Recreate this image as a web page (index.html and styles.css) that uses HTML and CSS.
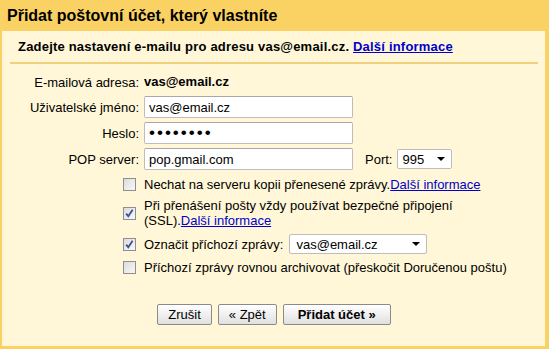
FILE: index.html
```html
<!DOCTYPE html>
<html lang="cs">
<head>
<meta charset="utf-8">
<title>Přidat poštovní účet</title>
<link rel="stylesheet" href="styles.css">
</head>
<body>
<div class="dialog">
  <h1 class="title">Přidat poštovní účet, který vlastníte</h1>
  <div class="panel">
    <p class="intro">Zadejte nastavení e-mailu pro adresu vas@email.cz. <a href="#" class="link">Další informace</a></p>
    <div class="sep"></div>
    <div class="form">
      <span class="label">E-mailová adresa:</span>
      <span class="value">vas@email.cz</span>
      <span class="label">Uživatelské jméno:</span>
      <div class="field"><input class="input" type="text" value="vas@email.cz"></div>
      <span class="label">Heslo:</span>
      <div class="field"><input class="input pass" type="password" value="xxxxxxxx"></div>
      <span class="label">POP server:</span>
      <div class="field">
        <input class="input" type="text" value="pop.gmail.com">
        <span class="port-label">Port:</span>
        <div class="select port"><span class="sel-text">995</span><span class="arrow"></span></div>
      </div>
    </div>
    <div class="options">
      <div class="opt">
        <span class="cb"></span>
        <span class="opt-text">Nechat na serveru kopii přenesené zprávy.<a href="#" class="link">Další informace</a></span>
      </div>
      <div class="opt">
        <span class="cb"><svg viewBox="0 0 11 11" width="11" height="11"><path d="M2.2 5.6 L4.3 8.2 L8.6 1.8" fill="none" stroke="#3b4f9c" stroke-width="1.8"/></svg></span>
        <span class="opt-text">Při přenášení pošty vždy používat bezpečné připojení<br>(SSL).<a href="#" class="link">Další informace</a></span>
      </div>
      <div class="opt">
        <span class="cb"><svg viewBox="0 0 11 11" width="11" height="11"><path d="M2.2 5.6 L4.3 8.2 L8.6 1.8" fill="none" stroke="#3b4f9c" stroke-width="1.8"/></svg></span>
        <span class="opt-text">Označit příchozí zprávy:</span>
        <div class="select label-sel"><span class="sel-text">vas@email.cz</span><span class="arrow"></span></div>
      </div>
      <div class="opt">
        <span class="cb"></span>
        <span class="opt-text">Příchozí zprávy rovnou archivovat (přeskočit Doručenou poštu)</span>
      </div>
    </div>
    <div class="buttons">
      <button class="btn">Zrušit</button>
      <button class="btn">« Zpět</button>
      <button class="btn primary">Přidat účet »</button>
    </div>
  </div>
</div>
</body>
</html>
```
FILE: styles.css
```css
* { box-sizing: border-box; }
html, body { margin: 0; padding: 0; }
body {
  background: #fad163;
  font-family: "Liberation Sans", Arial, sans-serif;
  font-size: 13px;
  color: #000;
  width: 549px;
  height: 349px;
  overflow: hidden;
}
.dialog {
  display: flex;
  flex-direction: column;
  height: 349px;
}
.title {
  margin: 0;
  height: 31px;
  padding: 7px 0 0 7px;
  font-size: 16px;
  font-weight: bold;
  line-height: 18px;
  color: #000;
}
.panel {
  margin: 0 4px 3px 2px;
  flex: 1;
  background: #fff7d7;
  padding: 0 7px 0 8px;
}
.intro {
  margin: 0;
  padding: 8px 0 0 8px;
  font-weight: bold;
  line-height: 15px;
  height: 31px;
  letter-spacing: 0.2px;
}
.link { color: #0000cc; text-decoration: underline; font-weight: inherit; }
.intro .link { font-weight: bold; }
.sep {
  height: 2px;
  background: #f0d07c;
}
.form {
  display: grid;
  grid-template-columns: 129px auto;
  column-gap: 5px;
  row-gap: 4px;
  margin-top: 8px;
  align-items: center;
}
.label {
  text-align: right;
  line-height: 15px;
}
.value {
  font-weight: bold;
  line-height: 20px;
}
.field {
  display: flex;
  align-items: center;
  height: 22px;
}
.input {
  width: 209px;
  height: 22px;
  border: 1px solid #bdbdbd;
  border-top-color: #a8a8a8;
  border-radius: 2px;
  background: #fff;
  padding: 0 4px;
  font-family: "Liberation Sans", Arial, sans-serif;
  font-size: 13px;
  color: #000;
  outline: none;
}
.input.pass {
  font-size: 17px;
  letter-spacing: 2px;
}
.port-label {
  margin-left: 12px;
  margin-right: 5px;
}
.select {
  display: flex;
  align-items: center;
  justify-content: space-between;
  height: 20px;
  background: #fff;
  border: 1px solid #bdbdbd;
  border-radius: 2px;
  padding: 0 6px 0 4px;
}
.select.port { width: 55px; }
.select.label-sel { width: 138px; margin-left: 6px; padding-left: 6px; }
.arrow {
  width: 0;
  height: 0;
  border-left: 4px solid transparent;
  border-right: 4px solid transparent;
  border-top: 4px solid #000;
}
.options {
  display: flex;
  flex-direction: column;
  gap: 6px;
  margin-top: 7px;
  padding-left: 113px;
}
.opt {
  display: flex;
  align-items: center;
  min-height: 15px;
}
.opt-text { line-height: 15px; }
.cb {
  flex: none;
  width: 13px;
  height: 13px;
  border: 1px solid #8e8f8f;
  background: linear-gradient(135deg, #dcdcdc, #f8f8f8);
  margin-right: 8px;
  display: flex;
  align-items: center;
  justify-content: center;
}
.buttons {
  display: flex;
  justify-content: center;
  gap: 6px;
  margin-top: 29px;
}
.btn {
  height: 21px;
  padding: 0 10px;
  border: 1px solid #8a8a8a;
  border-radius: 2px;
  background: linear-gradient(#ffffff, #e0e0e0);
  font-family: "Liberation Sans", Arial, sans-serif;
  font-size: 13px;
  color: #000;
}
.btn.primary { font-weight: bold; padding: 0 14px; }
```
